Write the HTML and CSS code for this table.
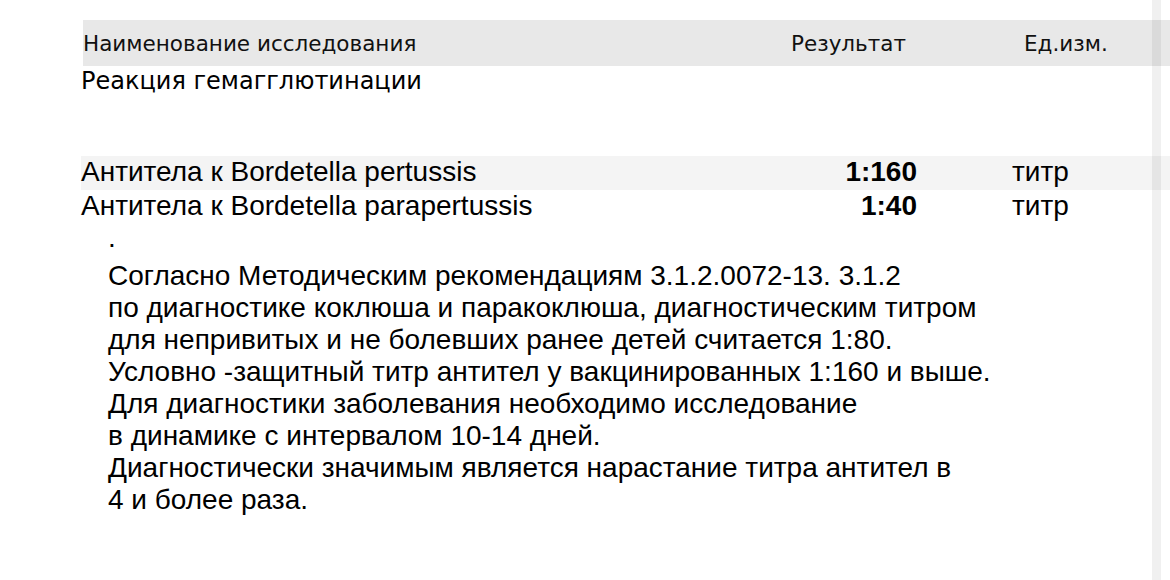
FILE: index.html
```html
<!DOCTYPE html>
<html lang="ru">
<head>
<meta charset="utf-8">
<title>Результаты исследования</title>
<link rel="stylesheet" href="styles.css">
</head>
<body>
<div class="report">
  <div class="thead">
    <div class="th th-name">Наименование исследования</div>
    <div class="th th-result">Результат</div>
    <div class="th th-unit">Ед.изм.</div>
  </div>
  <div class="section-title">Реакция гемагглютинации</div>
  <div class="rows">
    <div class="row row-alt">
      <div class="cell cell-name">Антитела к Bordetella pertussis</div>
      <div class="cell cell-result">1:160</div>
      <div class="cell cell-unit">титр</div>
    </div>
    <div class="row">
      <div class="cell cell-name">Антитела к Bordetella parapertussis</div>
      <div class="cell cell-result">1:40</div>
      <div class="cell cell-unit">титр</div>
    </div>
  </div>
  <div class="notes">
    <p class="dot">.</p>
    <p class="note">Согласно Методическим рекомендациям 3.1.2.0072-13. 3.1.2<br>по диагностике коклюша и паракоклюша, диагностическим титром<br>для непривитых и не болевших ранее детей считается 1:80.<br>Условно -защитный титр антител у вакцинированных 1:160 и выше.<br>Для диагностики заболевания необходимо исследование<br>в динамике с интервалом 10-14 дней.<br>Диагностически значимым является нарастание титра антител в<br>4 и более раза.</p>
  </div>
</div>
<div class="scroll-track"></div>
</body>
</html>
```
FILE: styles.css
```css
html, body {
  margin: 0;
  padding: 0;
  background: #ffffff;
  color: #000000;
  height: 100%;
  overflow: hidden;
}

.report {
  padding-top: 20px;
  padding-left: 81px;
}

.thead {
  margin-left: 2px;
  height: 46px;
  background: #e8e8e8;
  display: grid;
  grid-template-columns: 708px 233px 1fr;
  align-items: center;
  font-family: "DejaVu Sans", Verdana, sans-serif;
  font-size: 21.5px;
  color: #111111;
  white-space: nowrap;
}

.section-title {
  margin-top: 2px;
  font-family: "DejaVu Sans", Verdana, sans-serif;
  font-size: 24px;
  line-height: 27px;
  color: #000000;
  white-space: nowrap;
}

.rows {
  margin-top: 61px;
  font-family: "Liberation Sans", Arial, sans-serif;
  font-size: 28px;
}

.row {
  height: 34px;
  line-height: 32px;
  display: grid;
  grid-template-columns: 710px 126px 1fr;
  white-space: nowrap;
}

.row-alt {
  background: #f4f4f4;
}

.cell-result {
  text-align: right;
  font-weight: bold;
}

.cell-unit {
  padding-left: 95px;
}

.notes {
  padding-left: 27px;
  font-family: "Liberation Sans", Arial, sans-serif;
  font-size: 28px;
  white-space: nowrap;
}

.notes p {
  margin: 0;
}

.dot {
  line-height: 28px;
}

.note {
  line-height: 32px;
  margin-top: 8px !important;
}

.scroll-track {
  position: fixed;
  top: 0;
  bottom: 0;
  left: 1152px;
  width: 9px;
  background: rgba(0, 0, 0, 0.06);
}
```
